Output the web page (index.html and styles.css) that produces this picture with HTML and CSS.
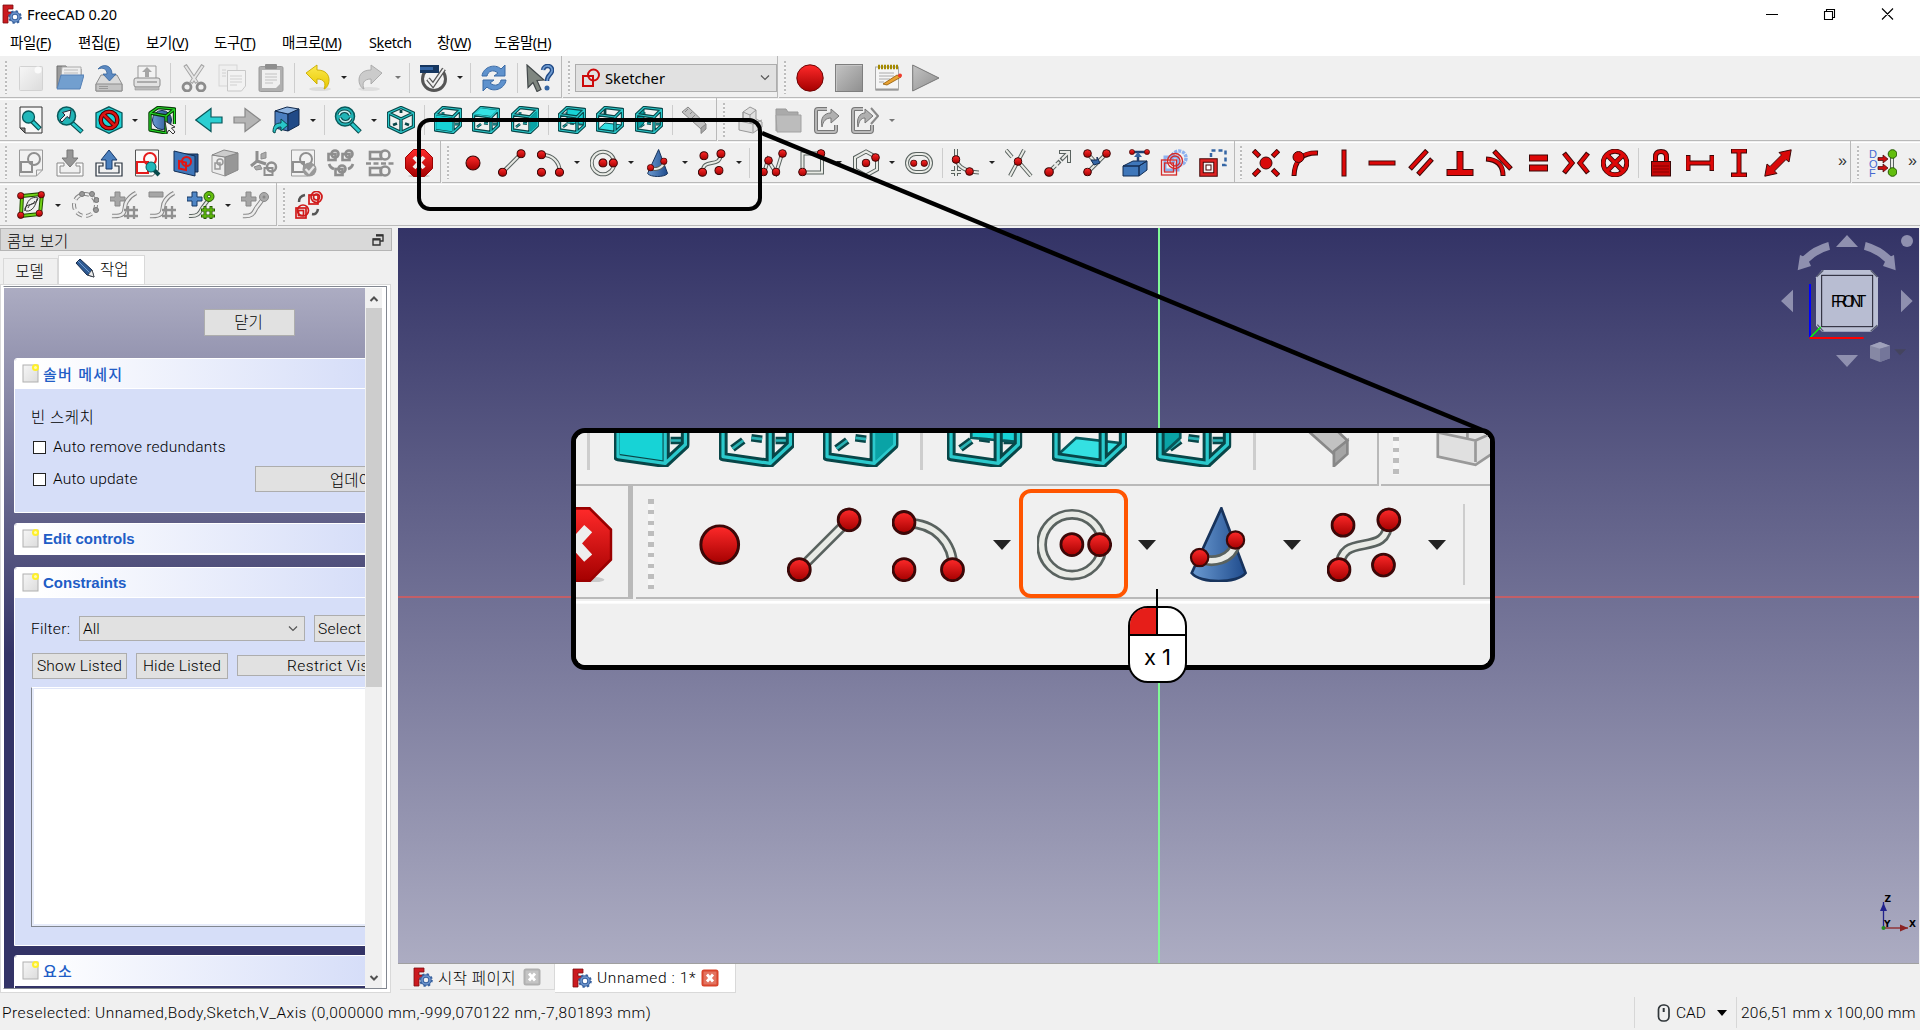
FILE: index.html
```html
<!DOCTYPE html>
<html lang="ko">
<head>
<meta charset="utf-8">
<title>FreeCAD 0.20</title>
<link rel="stylesheet" href="styles.css">
</head>
<body>
<svg class="defs" aria-hidden="true">
  <defs>
    <linearGradient id="red" x1="0" y1="0" x2="0" y2="1"><stop offset="0" stop-color="#ff2a2a"/><stop offset="1" stop-color="#a40000"/></linearGradient>
    <linearGradient id="blue" x1="0" y1="0" x2="1" y2="0"><stop offset="0" stop-color="#6b9bd2"/><stop offset="1" stop-color="#1f4b8c"/></linearGradient>
    <linearGradient id="grey" x1="0" y1="0" x2="1" y2="1"><stop offset="0" stop-color="#c4c4c4"/><stop offset="1" stop-color="#8f8f8f"/></linearGradient>
    <linearGradient id="paper" x1="0" y1="0" x2="1" y2="1"><stop offset="0" stop-color="#f6f6f6"/><stop offset="1" stop-color="#dcdcdc"/></linearGradient>
    <linearGradient id="yellow" x1="0" y1="0" x2="0" y2="1"><stop offset="0" stop-color="#fce94f"/><stop offset="1" stop-color="#e8c800"/></linearGradient>
  </defs>
  <!-- application -->
  <symbol id="app" viewBox="0 0 20 20"><path d="M1 1h10v4H6v3h4v4H6v7H1z" fill="#cb1a1f" stroke="#7c0c10" stroke-width=".8"/><circle cx="13" cy="13" r="4" fill="none" stroke="#37619e" stroke-width="3.4"/><circle cx="13" cy="13" r="5.8" fill="none" stroke="#37619e" stroke-width="2" stroke-dasharray="2.3 2.25"/><circle cx="13" cy="13" r="4" fill="none" stroke="#6d94cc" stroke-width="1.6"/></symbol>
  <symbol id="note" viewBox="0 0 18 20"><rect x="1" y="2" width="15" height="17" fill="url(#paper)" stroke="#b0b0b0"/><circle cx="13.5" cy="4.5" r="3.5" fill="#fff02a"/><circle cx="13.5" cy="4.5" r="1.5" fill="#fffbb0"/></symbol>
  <symbol id="closeTab" viewBox="0 0 18 18"><rect x=".5" y=".5" width="17" height="17" rx="2.5" fill="currentColor"/><rect x="2.5" y="2.5" width="13" height="13" fill="#fff" opacity=".25"/><path d="M6 5.500l6 7M12 5.500l-6 7" stroke="#fff" stroke-width="2.8"/></symbol>
  <!-- file -->
  <symbol id="new" viewBox="0 0 28 28"><rect x="2.5" y="2.5" width="23" height="24" rx="1" fill="url(#paper)" stroke="#d2d2d2"/><circle cx="21" cy="6" r="3.5" fill="#fafafa"/></symbol>
  <symbol id="open" viewBox="0 0 28 28"><path d="M1 24V2h9l2 3h13v6" fill="#9b9b9b" stroke="#6f6f6f"/><path d="M6 3h19v9H5z" fill="#eee" stroke="#aaa"/><path d="M8 6h14M8 9h14" stroke="#bbb"/><path d="M5 11h23l-4 14H1z" fill="#729fcf" stroke="#5580b6"/></symbol>
  <symbol id="save" viewBox="0 0 28 28"><path d="M6 11h16l5 9v7H1v-7z" fill="#dadada" stroke="#8d8d8d"/><path d="M1 20h26v7H1z" fill="#c4c4c4" stroke="#8d8d8d"/><path d="M4 22.500h9M4 24.500h9" stroke="#999"/><path d="M3 5C8-1 17 1 17 10h4l-6.500 7L8 10h4C12 5 8 3 3 5z" fill="#5c8ac2" stroke="#34639c" stroke-width=".8"/></symbol>
  <symbol id="print" viewBox="0 0 28 28"><path d="M5 16V2h18v14" fill="#f2f2f2" stroke="#999"/><path d="M14 3l5 5h-3v5h-4V8H9z" fill="#a5a5a5"/><rect x="1" y="14" width="26" height="9" rx="2" fill="#e2e2e2" stroke="#8b8b8b"/><path d="M4 18h20" stroke="#777"/><path d="M2 23h24v3H2z" fill="#bbb" stroke="#999" stroke-width=".6"/></symbol>
  <symbol id="cut" viewBox="0 0 28 28"><path d="M5 1l12 18M23 1L11 19" stroke="#a5a5a5" stroke-width="4"/><path d="M5.500 2l11 16M22.500 2l-11 16" stroke="#e6e6e6" stroke-width="2"/><circle cx="7" cy="23" r="4" fill="none" stroke="#8c8c8c" stroke-width="2.8"/><circle cx="21" cy="23" r="4" fill="none" stroke="#8c8c8c" stroke-width="2.8"/></symbol>
  <symbol id="copy" viewBox="0 0 28 28"><rect x="1" y="1" width="18" height="21" fill="#efefef" stroke="#d5d5d5"/><path d="M9.500 6.500h18V22l-4 5h-14z" fill="#f2f2f2" stroke="#c8c8c8"/><path d="M12 12h12M12 15h12M12 18h12M12 21h7M4 6h4M4 9h4M4 12h4" stroke="#d0d0d0"/></symbol>
  <symbol id="paste" viewBox="0 0 28 28"><rect x="2" y="2.5" width="24" height="25" rx="1.5" fill="#b0b0b0" stroke="#9a9a9a"/><path d="M5 6h18v14l-4 4H5z" fill="#f0f0f0"/><rect x="8" y="0" width="12" height="5" rx="1" fill="#8e8e8e"/><path d="M8 10h12M8 13h12M8 16h12M8 19h8" stroke="#c2c2c2"/></symbol>
  <symbol id="undo" viewBox="0 0 28 28"><ellipse cx="16" cy="25" rx="11" ry="2" fill="#dcdcdc"/><path d="M2 9l11-8v5c9 0 12 5 12 10 0 4-2 8-5 9 2-5 1-10-7-10v5z" fill="url(#yellow)" stroke="#c9ab00" stroke-width=".9"/></symbol>
  <symbol id="redo" viewBox="0 0 28 28"><ellipse cx="12" cy="25" rx="11" ry="2" fill="#dedede"/><path d="M25 9L14 1v5C5 6 2 11 2 16c0 4 2 8 5 9-2-5-1-10 7-10v5z" fill="#cbcbcb" stroke="#a7a7a7" stroke-width=".9"/></symbol>
  <symbol id="check" viewBox="0 0 28 28"><circle cx="15" cy="15" r="11.5" fill="#f2f2f2" stroke="#555" stroke-width="3"/><path d="M1 1h19v8H1z" fill="#16365f"/><path d="M1 3h13v3H1z" fill="#3465a4"/><path d="M20 1l5 4-5 4z" fill="#eee"/><path d="M9 15l5 6L25 5" fill="none" stroke="#555" stroke-width="4.5"/><path d="M9 15l5 6L25 5" fill="none" stroke="#f0f0f0" stroke-width="2"/></symbol>
  <symbol id="refresh" viewBox="0 0 28 28"><path d="M2 12C3 3 15-1 21 5l4-4v11H14l4-3C13 5 8 7 7 12z" fill="#5f92cd" stroke="#3a6aa5"/><path d="M26 16c-1 9-13 13-19 7l-4 4V16h11l-4 3c5 4 10 2 11-3z" fill="#5f92cd" stroke="#3a6aa5"/></symbol>
  <symbol id="help" viewBox="0 0 28 28"><path d="M1 1l17 15-7 .5 4 9-4 2-4-9-5 5z" fill="#7f8680" stroke="#42484a" stroke-width="1.2"/><path d="M17 6c1-6 10-5 9 1-1 4-5 4-5 10" fill="none" stroke="#204a87" stroke-width="4.5"/><path d="M17 6c1-6 10-5 9 1-1 4-5 4-5 10" fill="none" stroke="#6d9ad0" stroke-width="1.8"/><circle cx="21" cy="24" r="2.5" fill="#3465a4"/></symbol>
  <symbol id="sketcher" viewBox="0 0 20 20"><rect x="2" y="8" width="10" height="10" fill="none" stroke="#cc0a0a" stroke-width="2"/><circle cx="12.5" cy="7" r="5.5" fill="none" stroke="#cc0a0a" stroke-width="2"/></symbol>
  <symbol id="record" viewBox="0 0 28 28"><circle cx="14" cy="14" r="13.2" fill="url(#red)" stroke="#6e0505" stroke-width="1"/></symbol>
  <symbol id="stop" viewBox="0 0 28 28"><rect x=".5" y=".5" width="27" height="27" fill="url(#grey)" stroke="#7e7e7e"/><path d="M1.500 27V1.500H27" fill="none" stroke="#c5c5c5"/></symbol>
  <symbol id="macro" viewBox="0 0 28 28"><rect x="1.5" y="3" width="23" height="23" fill="#f5f5f5" stroke="#aaa"/><path d="M2 25.500h22" stroke="#999" stroke-width="2"/><path d="M4 3h20" stroke="#a48a00" stroke-width="4.5" stroke-dasharray="2 1"/><path d="M5 9h15M5 12h15M5 15h11M5 18h5" stroke="#aaa"/><path d="M9 20l14-9 4 2-14 8z" fill="#e9a233" stroke="#8f5902" stroke-width=".8"/><circle cx="26" cy="11.5" r="2" fill="#ef3b2d"/></symbol>
  <symbol id="play" viewBox="0 0 28 28"><path d="M.7 1v26L27 14z" fill="url(#grey)" stroke="#777"/></symbol>
  <!-- view -->
  <symbol id="fitall" viewBox="0 0 28 28"><path d="M3 1h22v26H8l-5-5z" fill="#f7f7f7" stroke="#333"/><path d="M3 22h5v5z" fill="#888" stroke="#333"/><path d="M15 15l8 8" stroke="#07484a" stroke-width="5"/><path d="M15 15l7.500 7.500" stroke="#29c9cc" stroke-width="2.5"/><circle cx="11.500" cy="11" r="6" fill="#22b8ba" stroke="#07595b" stroke-width="1.3"/></symbol>
  <symbol id="fitsel" viewBox="0 0 28 28"><path d="M16 17l10 9" stroke="#07484a" stroke-width="5"/><path d="M16 17l9.500 8.500" stroke="#29c9cc" stroke-width="2.8"/><circle cx="10.500" cy="10" r="9" fill="#21b4b6" stroke="#07595b" stroke-width="1.5"/><path d="M4 14l5-5-2.500-2.500L15 4l-1.500 8.500L11 10.500 6 16z" fill="#f5f5f5" stroke="#223" stroke-width="1"/></symbol>
  <symbol id="drawstyle" viewBox="0 0 28 28"><path d="M14 .8L27 7v14l-13 6.300L1 21V7z" fill="#1fd2d5" stroke="#08575a" stroke-width="1.3"/><circle cx="14" cy="14" r="8.3" fill="none" stroke="#470000" stroke-width="4.5"/><path d="M8 8l12 12" stroke="#470000" stroke-width="4.5"/><circle cx="14" cy="14" r="8.3" fill="none" stroke="#dc1414" stroke-width="2.5"/><path d="M8 8l12 12" stroke="#dc1414" stroke-width="2.5"/></symbol>
  <symbol id="bbox" viewBox="0 0 28 28"><circle cx="14" cy="14" r="9.5" fill="url(#blue)" stroke="#10294d"/><g class="green"><path d="M2 7l16 3v17L2 24zM2 7l8-5.500L26.500 3 18 10M26.500 3v15" class="ko"/><path d="M2 7l16 3v17L2 24zM2 7l8-5.500L26.500 3 18 10M26.500 3v15" class="ki"/></g><path d="M17 15l10 6-3.500 1 3.500 4-2 2-4-4-2 3z" fill="#f3f3f3" stroke="#333"/></symbol>
  <symbol id="back" viewBox="0 0 28 28"><path d="M.7 14L16 2.500V11h11v6H16v8.500z" fill="#2bcfd2" stroke="#08575a" stroke-width="1.2"/></symbol>
  <symbol id="fwd" viewBox="0 0 28 28"><path d="M27.300 14L12 2.500V11H1v6h11v8.500z" fill="#b4b4b4" stroke="#888" stroke-width="1.2"/></symbol>
  <symbol id="linknav" viewBox="0 0 28 28"><path d="M3 5l13 3v17L3 22z" fill="#4a7fc0" stroke="#10294d"/><path d="M16 8l11-5v16l-11 6z" fill="#204a87" stroke="#10294d"/><path d="M3 5l12-4 12 2-11 5z" fill="#8fb4e0" stroke="#10294d"/><path d="M1 26c0-7 3-9 8-9v-4l7 6-7 6v-4c-3 0-5 1-6 6z" fill="#28c6c9" stroke="#07484a"/></symbol>
  <symbol id="sync" viewBox="0 0 28 28"><path d="M17 17l9 9" stroke="#07484a" stroke-width="5"/><path d="M17 17l8.500 8.500" stroke="#29c9cc" stroke-width="2.8"/><circle cx="11" cy="10.5" r="9.5" fill="#21b4b6" stroke="#07595b" stroke-width="1.5"/><path d="M5 9c2-5 9-5 11 0M17 12c-2 5-9 5-11 0" fill="none" stroke="#0c4749" stroke-width="3.5"/><path d="M5 9c2-5 9-5 11 0M17 12c-2 5-9 5-11 0" fill="none" stroke="#c7f1f2" stroke-width="1.5"/></symbol>
  <symbol id="iso" viewBox="0 0 28 28"><path d="M14 1.500L26.500 7v13.500L14 26.500 1.500 20.500V7zM1.500 7L14 13l12.500-6M14 13v13" class="ko"/><path d="M14 1.500L26.500 7v13.500L14 26.500 1.500 20.500V7zM1.500 7L14 13l12.500-6M14 13v13" class="ki"/><path d="M14 4v3M6 19l4-1.500M22 19l-4-1.500" class="stub-o"/></symbol>
  <symbol id="cube" viewBox="0 0 28 28"><path d="M1.500 8.500L19 11v15.500L1.500 24zM1.500 8.500L9 1.500l17.500 2L19 11M26.500 3.500v16l-7.500 7" class="ko"/><path d="M1.500 8.500L19 11v15.500L1.500 24zM1.500 8.500L9 1.500l17.500 2L19 11M26.500 3.500v16l-7.500 7" class="ki"/></symbol>
  <symbol id="stubs" viewBox="0 0 28 28"><path d="M5 21l4-3M9 6v3M12 17l4 .500M21 18h4" class="stub-o"/><path d="M5 21l4-3M9 6v3M12 17l4 .500M21 18h4" class="stub-i"/></symbol>
  <symbol id="front" viewBox="0 0 28 28"><use href="#stubs"/><use href="#cube"/><path d="M2.200 9.500L18 11.800v13.500L2.200 23z" fill="#17d3d6"/></symbol>
  <symbol id="top" viewBox="0 0 28 28"><use href="#stubs"/><use href="#cube"/><path d="M2.500 8L9 2.200l16 2L19 10z" fill="#34e0e2"/></symbol>
  <symbol id="right" viewBox="0 0 28 28"><use href="#stubs"/><use href="#cube"/><path d="M19.500 11.500L26 5v14.500l-6.500 6z" fill="#0aa3a6"/></symbol>
  <symbol id="rear" viewBox="0 0 28 28"><use href="#stubs"/><path d="M9 2l17 2v14L9 16.500z" fill="#17d3d6"/><path d="M9 2v15l17 1.500" fill="none" stroke="#08575a"/><use href="#cube"/></symbol>
  <symbol id="bottom" viewBox="0 0 28 28"><path d="M2 23.500L9 17l17 2-7 7z" fill="#34e0e2" stroke="#08575a"/><path d="M9 3v5" class="stub-o"/><use href="#cube"/></symbol>
  <symbol id="left" viewBox="0 0 28 28"><use href="#stubs"/><path d="M2 9l7-7v15l-7 6.500z" fill="#0aa3a6" stroke="#08575a"/><use href="#cube"/></symbol>
  <symbol id="ruler" viewBox="0 0 28 28"><path d="M1 6l6-5 18 17-5 5z" fill="#c2c2c2" stroke="#888"/><path d="M20 22l5-4v5l-5 4.500z" fill="#a5a5a5" stroke="#888"/><path d="M7 3l-3 3M11 6l-2 2M14 9l-3 3M18 12l-2 2" stroke="#888"/></symbol>
  <symbol id="part" viewBox="0 0 28 28"><path d="M8 6l7-5 6 3v9l6 3v5l-9 6-14-3v-9l4-2z" fill="#e0e0e0" stroke="#999"/><path d="M4 15l14 3v8M18 18l9-4M8 12V6l7 3 6-5M15 9v8" fill="none" stroke="#999"/></symbol>
  <symbol id="folder" viewBox="0 0 28 28"><path d="M2 25V3h10l2 3h10v5" fill="#aaa" stroke="#999"/><path d="M2 9h25v17H3z" fill="#bcbcbc" stroke="#a2a2a2"/></symbol>
  <symbol id="link" viewBox="0 0 28 28"><path d="M14 3H5q-2 0-2 2v19q0 2 2 2h16q2 0 2-2v-5" fill="none" stroke="#777" stroke-width="4"/><path d="M14 3H5q-2 0-2 2v19q0 2 2 2h16q2 0 2-2v-5" fill="none" stroke="#bbb" stroke-width="1.8"/><path d="M9 21c-2-9 2-14 9-14V3l8 7-8 7v-5c-5 0-8 3-9 9z" fill="#b0b0b0" stroke="#777"/></symbol>
  <symbol id="links" viewBox="0 0 28 28"><path d="M12 3H4q-2 0-2 2v19q0 2 2 2h15q2 0 2-2v-5" fill="none" stroke="#777" stroke-width="4"/><path d="M12 3H4q-2 0-2 2v19q0 2 2 2h15q2 0 2-2v-5" fill="none" stroke="#bbb" stroke-width="1.8"/><path d="M7 21C5 12 9 7 14 7V3l8 7-8 7v-5c-4 0-6 3-7 9z" fill="#b0b0b0" stroke="#777"/><path d="M20 2l7 8-7 8" fill="none" stroke="#888" stroke-width="2"/></symbol>
  <!-- sketch -->
  <symbol id="sketch" viewBox="0 0 28 28"><path d="M2.500 1h23v20l-6 6h-17z" fill="#f2f2f2" stroke="#9a9a9a"/><path d="M19.500 27v-6h6" fill="none" stroke="#9a9a9a"/><rect x="4" y="13" width="11" height="10" fill="none" stroke="#8f8f8f" stroke-width="2"/><circle cx="17" cy="10" r="6" fill="none" stroke="#8f8f8f" stroke-width="2"/></symbol>
  <symbol id="import" viewBox="0 0 28 28"><path d="M8 14H1v13h26V14h-7v3h4v7H4v-7h4z" fill="#fafafa" stroke="#888"/><path d="M11 1h6v8h5l-8 9-8-9h5z" fill="#969696" stroke="#777"/></symbol>
  <symbol id="export" viewBox="0 0 28 28"><path d="M8 14H1v13h26V14h-7v3h4v7H4v-7h4z" fill="#fafafa" stroke="#27313d" stroke-width="1.2"/><path d="M11 20h6v-9h5l-8-10-8 10h5z" fill="#4b80be" stroke="#17396b"/></symbol>
  <symbol id="viewsk" viewBox="0 0 28 28"><path d="M2.500 1h23v20l-6 6h-17z" fill="#fafafa" stroke="#555"/><rect x="4" y="13" width="11" height="11" fill="none" stroke="#e51b1b" stroke-width="2"/><circle cx="17" cy="10" r="6" fill="none" stroke="#e51b1b" stroke-width="2"/><path d="M20 20l6 6" stroke="#07484a" stroke-width="4"/><circle cx="18" cy="18" r="5" fill="#22b8ba" stroke="#07595b"/></symbol>
  <symbol id="section" viewBox="0 0 28 28"><path d="M9 5h17v18H9z" fill="#27548f" stroke="#122c52"/><path d="M2 2l21 5v20L2 22z" fill="#3f77ba" stroke="#122c52"/><path d="M7 12l7 1.500V21l-7-1.500z" fill="none" stroke="#e01515" stroke-width="2"/><circle cx="14.5" cy="12.5" r="4.5" fill="none" stroke="#e01515" stroke-width="2"/></symbol>
  <symbol id="mapsk" viewBox="0 0 28 28"><path d="M1 6l13 2v19L1 23z" fill="#ececec" stroke="#999"/><path d="M14 8l13-4v17l-13 6z" fill="#979797" stroke="#888"/><path d="M1 6l12-5 14 3-13 4z" fill="#ccc" stroke="#888"/><rect x="4" y="14" width="5" height="6" fill="none" stroke="#999" stroke-width="1.5"/><circle cx="9" cy="13" r="3" fill="none" stroke="#999" stroke-width="1.5"/></symbol>
  <symbol id="reorient" viewBox="0 0 28 28"><path d="M7 2v10l-6 5M7 12l9 3" fill="none" stroke="#8e8e8e" stroke-width="3"/><path d="M11 5l5-2v6l-5 1zM4 18l6-2 2 4-6 1z" fill="#aaa" stroke="#8e8e8e"/><rect x="14.500" y="19" width="8" height="7" fill="none" stroke="#8f8f8f" stroke-width="2"/><circle cx="21.500" cy="18" r="4.5" fill="none" stroke="#8f8f8f" stroke-width="2.5"/></symbol>
  <symbol id="validate" viewBox="0 0 28 28"><use href="#sketch"/><circle cx="20.5" cy="20.5" r="7" fill="#999"/><path d="M16.500 20l3.500 3.500 5-6" fill="none" stroke="#e8e8e8" stroke-width="2.2"/></symbol>
  <symbol id="mergesk" viewBox="0 0 28 28"><g fill="none" stroke="#8e8e8e" stroke-width="2.6"><rect x="1.5" y="5" width="7" height="6"/><circle cx="8" cy="5" r="3.5"/><rect x="15.500" y="5" width="7" height="6"/><circle cx="22" cy="5" r="3.5"/><rect x="8.500" y="20" width="7" height="6"/><circle cx="15" cy="20" r="3.5"/><path d="M2 15c1 3 2 4 5 5M26 15c-1 3-2 4-5 5"/></g></symbol>
  <symbol id="mirrorsk" viewBox="0 0 28 28"><g fill="none" stroke="#8e8e8e" stroke-width="2.6"><rect x="4" y="3" width="11" height="7"/><circle cx="19" cy="6" r="4.5"/><rect x="4" y="19" width="11" height="7"/><circle cx="19" cy="22" r="4.5"/><path d="M0 14.500h28" stroke-dasharray="5 2.5"/></g></symbol>
  <symbol id="leave" viewBox="0 0 28 28"><ellipse cx="14" cy="27" rx="11" ry="1.5" fill="#c9c9c9"/><path d="M8.500.5h11l8 8v11l-8 8h-11l-8-8v-11z" fill="url(#red)" stroke="#9a0000"/><path d="M9 8l10 11M19 8L9 19" stroke="#eee" stroke-width="4"/></symbol>
  <!-- geometry -->
  <symbol id="dot" viewBox="0 0 10 10"><circle cx="5" cy="5" r="4.3" fill="url(#red)" stroke="#3c0808" stroke-width="1.1"/></symbol>
  <symbol id="point" viewBox="0 0 28 28"><circle cx="14" cy="14" r="7" fill="url(#red)" stroke="#3c0808" stroke-width="1.1"/></symbol>
  <symbol id="line" viewBox=".2 0 28 28"><path d="M5 23L23 5" class="ro"/><path d="M5 23L23 5" class="ri"/><use href="#dot" x="0" y="18.5" width="9.5" height="9.5"/><use href="#dot" x="18.5" y="0" width="9.5" height="9.5"/></symbol>
  <symbol id="arc" viewBox=".3 0 28 28"><path d="M6 6c10 0 17 7 17 17" class="ro"/><path d="M6 6c10 0 17 7 17 17" class="ri"/><use href="#dot" x="0" y="1" width="9.5" height="9.5"/><use href="#dot" x="0" y="18.5" width="9.5" height="9.5"/><use href="#dot" x="18" y="18.5" width="9.5" height="9.5"/></symbol>
  <symbol id="circle" viewBox="0 0 28 28"><circle cx="13" cy="14" r="11.3" class="ro"/><circle cx="13" cy="14" r="11.3" class="ri"/><use href="#dot" x="8.2" y="9.2" width="9.5" height="9.5"/><use href="#dot" x="18.5" y="9.2" width="9.5" height="9.5"/></symbol>
  <symbol id="cone" viewBox="-.3 0 28 28"><path d="M14.300 .5l9 24c-3 4-17 4-20 0z" fill="url(#blue)" stroke="#17335c"/><path d="M6 19c5 2 12 1 14-6" class="ro"/><path d="M6 19c5 2 12 1 14-6" class="ri"/><use href="#dot" x="2.5" y="15" width="7.5" height="7.5"/><use href="#dot" x="15.8" y="8.5" width="7.5" height="7.5"/></symbol>
  <symbol id="spline" viewBox=".3 0 28 28"><path d="M5 23C5 8 23 20 23 5" class="ro"/><path d="M5 23C5 8 23 20 23 5" class="ri"/><use href="#dot" x="0" y="18.5" width="9.5" height="9.5"/><use href="#dot" x="18.5" y="0" width="9.5" height="9.5"/><use href="#dot" x="1.5" y="2" width="9.5" height="9.5"/><use href="#dot" x="16.5" y="16.8" width="9.5" height="9.5"/></symbol>
  <symbol id="polyline" viewBox="0 0 28 28"><path d="M5 24L9 11l8 13 6-19" class="ro"/><path d="M5 24L9 11l8 13 6-19" class="ri"/><use href="#dot" x="0" y="18.5" width="9" height="9"/><use href="#dot" x="5" y="7" width="9" height="9"/><use href="#dot" x="12.5" y="18.5" width="9" height="9"/><use href="#dot" x="19" y="0" width="9" height="9"/></symbol>
  <symbol id="rect" viewBox="0 0 28 28"><path d="M4.500 4.500H24v19H4.500z" class="ro"/><path d="M4.500 4.500H24v19H4.500z" class="ri"/><use href="#dot" x="0" y="18.5" width="9" height="9"/><use href="#dot" x="18.5" y="0" width="9" height="9"/></symbol>
  <symbol id="hex" viewBox="0 0 28 28"><path d="M14 2.500l11 6v12l-11 6-11-6v-12z" class="ro"/><path d="M14 2.500l11 6v12l-11 6-11-6v-12z" class="ri"/><use href="#dot" x="9.5" y="9.5" width="9" height="9"/><use href="#dot" x="19" y="4" width="9" height="9"/></symbol>
  <symbol id="slot" viewBox="0 0 28 28"><rect x="2" y="5" width="24" height="18" rx="9" class="ro"/><rect x="2" y="5" width="24" height="18" rx="9" class="ri"/><use href="#dot" x="5" y="10.5" width="7.5" height="7.5"/><use href="#dot" x="15.5" y="10.5" width="7.5" height="7.5"/></symbol>
  <symbol id="fillet" viewBox="0 0 28 28"><path d="M5 0v10q3 12 23 13.500M5 17v10M0 23h10" class="ro"/><path d="M5 0v10q3 12 23 13.500M5 17v10M0 23h10" class="ri"/><use href="#dot" x=".5" y="6" width="9" height="9"/><use href="#dot" x="14" y="18" width="9" height="9"/></symbol>
  <symbol id="trim" viewBox="0 0 28 28"><path d="M19 1L5 27M13 12l13 15M1 1l6 7" class="ro"/><path d="M19 1L5 27M13 12l13 15M1 1l6 7" class="ri"/><use href="#dot" x="8.5" y="8" width="9" height="9"/></symbol>
  <symbol id="extend" viewBox="0 0 28 28"><path d="M5 23l11-11" class="ro" stroke-dasharray="9 2"/><path d="M17 11l8-8M15 3h10v11" class="ro"/><path d="M5 23l10-10M18 10l6-6M16 3h9v10" class="ri"/><use href="#dot" x="0" y="18" width="10" height="10"/></symbol>
  <symbol id="split" viewBox="0 0 28 28"><path d="M5 5l7 8M5 23L24 4" class="ro"/><path d="M5 5l7 8M5 23L24 4" class="ri"/><path d="M8 11h6v-3l3 6-6 2z" fill="#3465a4" stroke="#122c52"/><use href="#dot" x="0" y="0" width="9" height="9"/><use href="#dot" x="0" y="18.5" width="9" height="9"/><use href="#dot" x="19" y="0" width="9" height="9"/></symbol>
  <symbol id="external" viewBox="0 0 28 28"><path d="M1 17l10-5h14l-8 5zM1 17h16v10H1zM17 17l8-5v9l-8 6z" fill="#3f77ba" stroke="#122c52"/><path d="M9 3h16M16 12V6" stroke="#1f3f70" stroke-width="2.5"/><path d="M12 8l4-5 4 5z" fill="#3465a4"/><use href="#dot" x="7" y="0" width="6" height="6"/><use href="#dot" x="22" y="0" width="6" height="6"/></symbol>
  <symbol id="carbon" viewBox="0 0 28 28"><rect x="5" y="8" width="13" height="13" fill="none" stroke="#8db0ee" stroke-width="3"/><circle cx="19" cy="9" r="7" fill="none" stroke="#8db0ee" stroke-width="3.5" stroke-dasharray="3 1"/><rect x="1.5" y="11" width="15" height="15" fill="none" stroke="#d42a2a" stroke-width="1.3"/><rect x="4.5" y="14" width="9" height="9" fill="none" stroke="#d42a2a" stroke-width="1.3"/><circle cx="15" cy="12" r="7.5" fill="none" stroke="#d42a2a" stroke-width="1.3"/><circle cx="15" cy="12" r="5" fill="none" stroke="#d42a2a" stroke-width="1.3"/></symbol>
  <symbol id="construct" viewBox="0 0 28 28"><path d="M12 8V1.500h14.500V16H20" fill="none" stroke="#3465a4" stroke-width="2.5" stroke-dasharray="4 3"/><rect x="2.5" y="11.5" width="14" height="14" fill="none" stroke="#470000" stroke-width="4.5"/><rect x="2.5" y="11.5" width="14" height="14" fill="none" stroke="#e02323" stroke-width="2.5"/><rect x="7" y="16" width="5" height="5" fill="#fff" stroke="#470000"/></symbol>
  <!-- constraints -->
  <symbol id="coincident" viewBox="0 0 28 28"><path d="M1.500 1.500l6 6M26.500 1.500l-6 6M1.500 26.500l6-6M26.500 26.500l-6-6" class="co"/><path d="M2.200 2.200l4.600 4.600M25.800 2.200l-4.600 4.600M2.200 25.800l4.600-4.600M25.800 25.800l-4.600-4.600" class="ci"/><circle cx="14" cy="14" r="6" fill="#d90909" stroke="#3c0808"/></symbol>
  <symbol id="onobject" viewBox="0 0 28 28"><path d="M27 4Q4 3 3 27" class="co"/><path d="M26 4Q4 3 3 26" class="ci"/><circle cx="7.5" cy="8" r="5.5" fill="#d90909" stroke="#3c0808"/></symbol>
  <symbol id="vertical" viewBox="0 0 28 28"><path d="M14 .5v27" class="co"/><path d="M14 1.500v25" class="ci"/></symbol>
  <symbol id="horizontal" viewBox="0 0 28 28"><path d="M.5 14h27" class="co"/><path d="M1.500 14h25" class="ci"/></symbol>
  <symbol id="parallel" viewBox="0 0 28 28"><path d="M3 20L20 1.500M11 25.500L25 10" class="co"/><path d="M3.700 19.200L19.300 2.300M11.700 24.700L24.300 10.800" class="ci"/></symbol>
  <symbol id="perp" viewBox="0 0 28 28"><path d="M14 2v22M.5 23.500h27" class="co wide"/><path d="M14 3v22M1.500 23.500h25" class="ci wide"/></symbol>
  <symbol id="tangent" viewBox="0 0 28 28"><path d="M9 2l17 18M1 10q17 1 17 17" class="co"/><path d="M9.700 2.800L25.300 19.200M2 10q16 1 16 16" class="ci"/></symbol>
  <symbol id="equal" viewBox="0 0 28 28"><path d="M5 9h19M5 19h19" class="co wide"/><path d="M6 9h17M6 19h17" class="ci wide"/></symbol>
  <symbol id="symmetric" viewBox="0 0 28 28"><path d="M2 4l8 10-8 10M26 4l-8 10 8 10" class="co"/><path d="M2.500 5L10 14l-7.500 9M25.500 5L18 14l7.500 9" class="ci"/></symbol>
  <symbol id="block" viewBox="0 0 28 28"><circle cx="14" cy="14" r="11.8" class="co"/><path d="M6 6l16 16M22 6L6 22" class="co"/><circle cx="14" cy="14" r="11.8" class="ci"/><path d="M6 6l16 16M22 6L6 22" class="ci"/></symbol>
  <symbol id="lock" viewBox="0 0 28 28"><path d="M8.500 14V8q0-5.500 5.500-5.500T19.500 8v6" class="co"/><path d="M8.500 14V8q0-5.500 5.500-5.500T19.500 8v6" class="ci"/><rect x="4.5" y="12.5" width="19" height="14.5" fill="#c60606" stroke="#3c0808"/><path d="M6 17h16M6 20h16M6 23h16" stroke="#8a0000"/></symbol>
  <symbol id="hdist" viewBox="0 0 28 28"><path d="M2 6v16M26 6v16M2 14h24" class="co"/><path d="M2 7v14M26 7v14M2 14h24" class="ci"/></symbol>
  <symbol id="vdist" viewBox="0 0 28 28"><path d="M6 2h16M6 26h16M14 2v24" class="co"/><path d="M7 2h14M7 26h14M14 2v24" class="ci"/></symbol>
  <symbol id="dist" viewBox="0 0 28 28"><path d="M.8 27.200L3 15l3 2.500L17.500 6 15 3.500 27.200.8 25 13l-3-2.500L10.500 22l2.500 2.500z" fill="#d90909" stroke="#3c0808"/></symbol>
  <!-- B-spline tools -->
  <symbol id="bdegree" viewBox="0 0 28 28"><path d="M5 5l20-2-2 20-19 2z" fill="none" stroke="#1d4a00" stroke-width="4"/><path d="M5 5l20-2-2 20-19 2z" fill="none" stroke="#73d216" stroke-width="2"/><path d="M8 20C6 11 20 16 21 7 14 5 10 9 8 20z" fill="#eee" stroke="#333"/><path d="M9 20C16 21 19 13 20 8M11 17c2-5 5-3 7-7" fill="none" stroke="#333"/><use href="#dot" x="0" y="1" width="7.5" height="7.5"/><use href="#dot" x="20.5" y="0" width="7.5" height="7.5"/><use href="#dot" x="0" y="20.5" width="7.5" height="7.5"/><use href="#dot" x="18.5" y="18.5" width="7.5" height="7.5"/></symbol>
  <symbol id="bpoly" viewBox="0 0 28 28"><circle cx="14" cy="14" r="11" fill="none" stroke="#888" stroke-width="4" stroke-dasharray="6 4"/><circle cx="14" cy="14" r="11" fill="none" stroke="#eee" stroke-width="2" stroke-dasharray="6 4"/><g fill="#999" stroke="#777"><circle cx="11" cy="3" r="2.5"/><circle cx="21" cy="3" r="2.5"/><circle cx="25.5" cy="9" r="2.5"/><circle cx="25" cy="19" r="2.5"/></g></symbol>
  <symbol id="bcurve" viewBox="0 0 28 28"><path d="M2 25c18 1 10-9 15-15q3-5 9-8" fill="none" stroke="#888" stroke-width="4.5"/><path d="M2 25c18 1 10-9 15-15q3-5 9-8" fill="none" stroke="#ececec" stroke-width="2.5"/></symbol>
  <symbol id="binc" viewBox="0 0 28 28"><use href="#bcurve"/><path d="M5 1h5v5h5v4h-5v5H5v-5H0V6h5z" fill="#a6a6a6" stroke="#888"/><path d="M18 15v13M24 15v13M14 19h14M14 25h14" stroke="#909090" stroke-width="2.3"/></symbol>
  <symbol id="bdec" viewBox="0 0 28 28"><use href="#bcurve"/><path d="M1 1h14v5H1z" fill="#a6a6a6" stroke="#888"/><path d="M18 15v13M24 15v13M14 19h14M14 25h14" stroke="#909090" stroke-width="2.3"/></symbol>
  <symbol id="bmult" viewBox="0 0 28 28"><path d="M2 25c12 1 11-6 14-9q3-4 6-8" class="ro"/><path d="M2 25c12 1 11-6 14-9q3-4 6-8" class="ri"/><path d="M5 1h5v5h5v4h-5v5H5v-5H0V6h5z" fill="#4f86c6" stroke="#173865"/><circle cx="22" cy="5.5" r="5" fill="#62bd0d" stroke="#245b00"/><circle cx="22" cy="5.5" r="1.5" fill="#fff" stroke="#245b00"/><path d="M18 15v13M24 15v13M14 19h14M14 25h14" stroke="#245b00" stroke-width="3"/><path d="M18 16v11M24 16v11M15 19h12M15 25h12" stroke="#62bd0d" stroke-width="1.4"/></symbol>
  <symbol id="bknot" viewBox="0 0 28 28"><path d="M2 25c12 1 11-6 14-9q3-4 6-8" fill="none" stroke="#888" stroke-width="4.5"/><path d="M2 25c12 1 11-6 14-9q3-4 6-8" fill="none" stroke="#ececec" stroke-width="2.5"/><path d="M5 1h5v5h5v4h-5v5H5v-5H0V6h5z" fill="#a6a6a6" stroke="#888"/><circle cx="23" cy="6" r="4.5" fill="#aaa" stroke="#888"/><circle cx="23" cy="6" r="1.5" fill="#888"/></symbol>
  <symbol id="vspace" viewBox="0 0 28 28"><g fill="none" stroke="#d01a1a" stroke-width="1.7"><rect x="14" y="4" width="9" height="9"/><circle cx="21.5" cy="6" r="5.5"/><circle cx="21.5" cy="6" r="3"/><rect x="1" y="17" width="10" height="10"/><rect x="3.5" y="19.5" width="5" height="5"/><circle cx="8" cy="19.5" r="5.5"/></g><path d="M4 11q0-6 6-7M17 23q5 1 6-5" fill="none" stroke="#555" stroke-width="2.5"/></symbol>
</svg>

<div class="app">
  <header class="titlebar">
    <svg class="app-icon"><use href="#app"/></svg><span class="title">FreeCAD 0.20</span>
    <svg class="window-buttons" viewBox="0 0 140 20"><path d="M5 10.500h12M63.500 7.500h8v8h-8zM65.500 7.500v-2h8v8h-2M121 4.500l11 11M132 4.500l-11 11" fill="none" stroke="#000" stroke-width="1.1"/></svg>
  </header>
  <nav class="menu">
    <span>파일(<u>F</u>)</span><span>편집(<u>E</u>)</span><span>보기(<u>V</u>)</span><span>도구(<u>T</u>)</span><span class="wide">매크로(<u>M</u>)</span><span class="sketch-menu">S<u>k</u>etch</span><span class="window-menu">창(<u>W</u>)</span><span>도움말(<u>H</u>)</span>
  </nav>

  <div class="row first">
    <div class="toolbar file-bar">
      <i class="btn"><svg><use href="#new"/></svg></i><i class="btn"><svg><use href="#open"/></svg></i><i class="btn"><svg><use href="#save"/></svg></i><i class="btn"><svg><use href="#print"/></svg></i><i class="sep"></i>
      <i class="btn"><svg><use href="#cut"/></svg></i><i class="btn"><svg><use href="#copy"/></svg></i><i class="btn"><svg><use href="#paste"/></svg></i><i class="sep"></i>
      <i class="btn"><svg><use href="#undo"/></svg></i><i class="drop"></i><i class="btn"><svg><use href="#redo"/></svg></i><i class="drop off"></i><i class="sep"></i>
      <i class="btn"><svg><use href="#check"/></svg></i><i class="drop"></i><i class="sep"></i><i class="btn"><svg><use href="#refresh"/></svg></i><i class="sep"></i><i class="btn"><svg><use href="#help"/></svg></i>
    </div>
    <div class="toolbar workbench-bar">
      <div class="combo workbench"><svg class="wb-icon"><use href="#sketcher"/></svg><span>Sketcher</span><svg class="chevron" viewBox="0 0 10 6"><path d="M1 .5l4 4 4-4" fill="none" stroke="#555" stroke-width="1.2"/></svg></div>
    </div>
    <div class="toolbar rest">
      <i class="btn"><svg><use href="#record"/></svg></i><i class="btn"><svg><use href="#stop"/></svg></i><i class="btn"><svg><use href="#macro"/></svg></i><i class="btn"><svg><use href="#play"/></svg></i>
    </div>
  </div>

  <div class="row tall">
    <div class="toolbar view-bar">
      <i class="btn"><svg><use href="#fitall"/></svg></i><i class="btn"><svg><use href="#fitsel"/></svg></i><i class="btn"><svg><use href="#drawstyle"/></svg></i><i class="drop"></i><i class="btn"><svg><use href="#bbox"/></svg></i><i class="sep"></i>
      <i class="btn"><svg><use href="#back"/></svg></i><i class="btn"><svg><use href="#fwd"/></svg></i><i class="btn"><svg><use href="#linknav"/></svg></i><i class="drop"></i><i class="sep"></i>
      <i class="btn"><svg><use href="#sync"/></svg></i><i class="drop"></i><i class="btn"><svg><use href="#iso"/></svg></i><i class="sep"></i>
      <i class="btn"><svg><use href="#front"/></svg></i><i class="btn"><svg><use href="#top"/></svg></i><i class="btn"><svg><use href="#right"/></svg></i><i class="sep"></i>
      <i class="btn"><svg><use href="#rear"/></svg></i><i class="btn"><svg><use href="#bottom"/></svg></i><i class="btn"><svg><use href="#left"/></svg></i><i class="sep"></i><i class="btn"><svg><use href="#ruler"/></svg></i>
    </div>
    <div class="toolbar rest">
      <i class="btn"><svg><use href="#part"/></svg></i><i class="btn"><svg><use href="#folder"/></svg></i><i class="btn"><svg><use href="#link"/></svg></i><i class="btn"><svg><use href="#links"/></svg></i><i class="drop off"></i>
    </div>
  </div>

  <div class="row">
    <div class="toolbar sketch-bar">
      <i class="btn"><svg><use href="#sketch"/></svg></i><i class="btn"><svg><use href="#import"/></svg></i><i class="btn"><svg><use href="#export"/></svg></i><i class="btn"><svg><use href="#viewsk"/></svg></i><i class="btn"><svg><use href="#section"/></svg></i><i class="btn"><svg><use href="#mapsk"/></svg></i><i class="btn"><svg><use href="#reorient"/></svg></i><i class="btn"><svg><use href="#validate"/></svg></i><i class="btn"><svg><use href="#mergesk"/></svg></i><i class="btn"><svg><use href="#mirrorsk"/></svg></i><i class="btn"><svg><use href="#leave"/></svg></i>
    </div>
    <div class="toolbar geometry-bar">
      <i class="btn"><svg><use href="#point"/></svg></i><i class="btn"><svg><use href="#line"/></svg></i><i class="btn"><svg><use href="#arc"/></svg></i><i class="drop"></i><i class="btn"><svg><use href="#circle"/></svg></i><i class="drop"></i><i class="btn"><svg><use href="#cone"/></svg></i><i class="drop"></i><i class="btn"><svg><use href="#spline"/></svg></i><i class="drop"></i><i class="sep"></i>
      <i class="btn"><svg><use href="#polyline"/></svg></i><i class="btn"><svg><use href="#rect"/></svg></i><i class="drop"></i><i class="btn"><svg><use href="#hex"/></svg></i><i class="drop"></i><i class="btn"><svg><use href="#slot"/></svg></i><i class="sep"></i>
      <i class="btn"><svg><use href="#fillet"/></svg></i><i class="drop"></i><i class="btn"><svg><use href="#trim"/></svg></i><i class="btn"><svg><use href="#extend"/></svg></i><i class="btn"><svg><use href="#split"/></svg></i><i class="btn"><svg><use href="#external"/></svg></i><i class="btn"><svg><use href="#carbon"/></svg></i><i class="btn"><svg><use href="#construct"/></svg></i>
    </div>
    <div class="toolbar constraint-bar">
      <i class="btn"><svg><use href="#coincident"/></svg></i><i class="btn"><svg><use href="#onobject"/></svg></i><i class="btn"><svg><use href="#vertical"/></svg></i><i class="btn"><svg><use href="#horizontal"/></svg></i><i class="btn"><svg><use href="#parallel"/></svg></i><i class="btn"><svg><use href="#perp"/></svg></i><i class="btn"><svg><use href="#tangent"/></svg></i><i class="btn"><svg><use href="#equal"/></svg></i><i class="btn"><svg><use href="#symmetric"/></svg></i><i class="btn"><svg><use href="#block"/></svg></i><i class="sep"></i>
      <i class="btn"><svg><use href="#lock"/></svg></i><i class="btn"><svg><use href="#hdist"/></svg></i><i class="btn"><svg><use href="#vdist"/></svg></i><i class="btn"><svg><use href="#dist"/></svg></i><span class="more">»</span>
    </div>
    <div class="toolbar rest">
      <i class="btn"><svg viewBox="0 0 28 28"><text x="0" y="9" class="dof">D</text><text x="0" y="18.5" class="dof">O</text><text x="0" y="28" class="dof">F</text><path d="M23 5v18" class="ro"/><path d="M23 5v18" class="ri"/><path d="M9 8.500h5V6l5 4-5 4v-2.500H9zM9 17.500h5V15l5 4-5 4v-2.500H9z" fill="#c91010" stroke="#3c0808" stroke-width=".7"/><circle cx="23.5" cy="5" r="4.3" fill="#62bd0d" stroke="#245b00"/><circle cx="23.5" cy="23" r="4.3" fill="#62bd0d" stroke="#245b00"/></svg></i><span class="more">»</span>
    </div>
  </div>

  <div class="row tall">
    <div class="toolbar spline-bar">
      <i class="btn"><svg><use href="#bdegree"/></svg></i><i class="drop"></i><i class="btn"><svg><use href="#bpoly"/></svg></i><i class="btn"><svg><use href="#binc"/></svg></i><i class="btn"><svg><use href="#bdec"/></svg></i><i class="btn"><svg><use href="#bmult"/></svg></i><i class="drop"></i><i class="btn"><svg><use href="#bknot"/></svg></i>
    </div>
    <div class="toolbar rest"><i class="btn"><svg><use href="#vspace"/></svg></i></div>
  </div>

  <main class="work">
    <aside class="dock">
      <div class="dock-title"><span>콤보 보기</span><svg class="float" viewBox="0 0 12 12"><path d="M4 1h7v6H8M1 5h7v6H1z" fill="none" stroke="#333" stroke-width="1.4"/><path d="M1 5.500h7M4 1.500h7" stroke="#333" stroke-width="2"/></svg></div>
      <div class="tabs">
        <div class="tab">모델</div>
        <div class="tab on"><svg class="pencil" viewBox="0 0 20 20"><path d="M1 5l4-4 12 11 2 7-7-2z" fill="#2d5a93" stroke="#14294a"/><path d="M3 3l12 12" stroke="#6f9bd0"/><path d="M13 17l4-5 2 7z" fill="#eee" stroke="#222" stroke-width=".6"/></svg>작업</div>
      </div>
      <div class="pane">
        <div class="frame">
          <div class="tasks">
            <div class="close-line"><button class="button close">닫기</button></div>
            <section class="group solver">
              <h2 class="korean"><svg><use href="#note"/></svg>솔버 메세지</h2>
              <div class="body">
                <p>빈 스케치</p>
                <label><i class="box"></i>Auto remove redundants</label>
                <div class="update"><label><i class="box"></i>Auto update</label><button class="button">업데이트</button></div>
              </div>
            </section>
            <section class="group edit"><h2><svg><use href="#note"/></svg>Edit controls</h2></section>
            <section class="group constraints">
              <h2><svg><use href="#note"/></svg>Constraints</h2>
              <div class="body">
                <div class="filter"><span>Filter:</span><div class="combo"><span>All</span><svg class="chevron" viewBox="0 0 10 6"><path d="M1 .5l4 4 4-4" fill="none" stroke="#555" stroke-width="1.2"/></svg></div><button class="button select">Select</button></div>
                <div class="buttons"><button class="button show">Show Listed</button><button class="button hide">Hide Listed</button><button class="button restrict">Restrict Visibility</button></div>
                <div class="list"></div>
              </div>
            </section>
            <section class="group elements"><h2 class="korean"><svg><use href="#note"/></svg>요소</h2></section>
          </div>
          <div class="scroll">
            <svg viewBox="0 0 16 20"><path d="M4.500 13L8 9.500l3.500 3.500" fill="none" stroke="#505050" stroke-width="2"/></svg>
            <i class="thumb"></i>
            <svg viewBox="0 0 16 20"><path d="M4.500 8L8 11.500 11.500 8" fill="none" stroke="#505050" stroke-width="2"/></svg>
          </div>
        </div>
      </div>
    </aside>

    <section class="mdi">
      <div class="view">
        <i class="axis-v"></i><i class="axis-h"></i>
        <svg class="navcube" viewBox="0 24 540 456">
          <g fill="#8f90af"><path d="M288 81l33-36 33 36zM288 405h66l-33 36zM159 209v68l-36-34zM483 209v68l35-34z"/><circle cx="501" cy="63" r="18"/><path d="M265 66l5 23q-35 9-63 36l6 13-40 13 7-46 9 4q30-30 76-43zM377 66l-5 23q35 9 63 36l-6 13 38 13-5-46-9 4q-30-30-76-43z"/></g>
          <path d="M246 150h148l20 22v145l-20 18H246l-18-18V172z" fill="#bbc0d4"/>
          <rect x="245" y="166" width="153" height="154" fill="#b8bdd2" stroke="#1c1c2a" stroke-width="3"/>
          <path d="M230 170l20-19M392 151l20 20M232 314l18 20M392 334l20-18" stroke="#555a70" stroke-width="4"/>
          <path d="M210 192v162" stroke="#00f" stroke-width="6"/><path d="M210 353l32-32" stroke="#0f0" stroke-width="4"/><path d="M208 354h163" stroke="#f00" stroke-width="6"/>
          <text x="273" y="261" textLength="106">FRONT</text>
          <path d="M420 366l30 11v38l-30 11-30-11v-38z" fill="#8688a4"/><path d="M390 377l30-11 30 11-30 9z" fill="#9fa1bb"/><path d="M420 386l30-9v38l-30 11z" fill="#74769a"/><path d="M463 388h35l-18 18z" fill="#44445e"/>
        </svg>
        <svg class="axes" viewBox="0 0 40 40"><path d="M5.500 34V8" stroke="#22228c" stroke-width="1.3"/><path d="M2 17l3.500-8L9 17z" fill="#22228c"/><path d="M6 34h24" stroke="#8c2222" stroke-width="1.3"/><path d="M22 30.500l8 3.500-8 3.500z" fill="#8c2222"/><circle cx="5.5" cy="34" r="2" fill="#228c22"/><text x="6.5" y="7.5">Z</text><text x="6" y="32.5">Y</text><text x="31" y="32.5">X</text></svg>
      </div>
      <div class="doc-tabs">
        <div class="doc"><svg class="app-icon"><use href="#app"/></svg><span>시작 페이지</span><svg class="x"><use href="#closeTab"/></svg></div>
        <div class="doc on"><svg class="app-icon"><use href="#app"/></svg><span>Unnamed : 1*</span><svg class="x"><use href="#closeTab"/></svg></div>
      </div>
    </section>
  </main>

  <footer class="status">
    <span class="message">Preselected: Unnamed,Body,Sketch,V_Axis (0,000000 mm,-999,070122 nm,-7,801893 mm)</span>
    <div class="nav-style"><svg viewBox="0 0 14 18"><rect x="1.5" y="1" width="10.5" height="16" rx="4.5" fill="none" stroke="#30363a" stroke-width="1.7"/><path d="M6.700 4v4" stroke="#30363a" stroke-width="2"/></svg><span>CAD</span><i class="arrow"></i></div>
    <span class="dims">206,51 mm x 100,00 mm</span>
  </footer>
</div>

<!-- callout -->
<div class="source-box"></div>
<svg class="leader" viewBox="0 0 740 310"><path d="M6 9L726 306" stroke="#000" stroke-width="4.5"/></svg>
<div class="inset">
  <div class="row tall inset-top">
    <div class="toolbar bare inset-views">
      <i class="sep"></i><i class="btn"><svg><use href="#front"/></svg></i><i class="btn"><svg><use href="#top"/></svg></i><i class="btn"><svg><use href="#right"/></svg></i><i class="sep"></i>
      <i class="btn"><svg><use href="#rear"/></svg></i><i class="btn"><svg><use href="#bottom"/></svg></i><i class="btn"><svg><use href="#left"/></svg></i><i class="sep"></i><i class="btn"><svg><use href="#ruler"/></svg></i>
    </div>
    <div class="toolbar rest"><i class="btn"><svg><use href="#part"/></svg></i></div>
  </div>
  <div class="row inset-bottom">
    <div class="toolbar bare inset-leave"><i class="btn"><svg><use href="#leave"/></svg></i></div>
    <div class="toolbar rest">
      <i class="btn"><svg><use href="#point"/></svg></i><i class="btn"><svg><use href="#line"/></svg></i><i class="btn"><svg><use href="#arc"/></svg></i><i class="drop"></i><i class="btn chosen"><svg><use href="#circle"/></svg></i><i class="drop"></i><i class="btn"><svg><use href="#cone"/></svg></i><i class="drop"></i><i class="btn"><svg><use href="#spline"/></svg></i><i class="drop"></i><i class="sep last"></i>
    </div>
  </div>
  <div class="row inset-rest"></div>
</div>
<div class="mouse"><i class="stem"></i><i class="left-key"></i><i class="right-key"></i><span>x 1</span></div>
</body>
</html>
```
FILE: styles.css
```css
*, *::before, *::after { box-sizing: border-box; }
body {
  --u: 1px;
  --line: #b9b9b9;
  margin: 0;
  width: 1921px;
  height: 1031px;
  overflow: hidden;
  position: relative;
  background: #fff;
  color: #000;
  font: 300 15.5px Roboto, "Noto Sans CJK KR", sans-serif;
}
i { font-style: normal; }
.defs { position: absolute; width: 0; height: 0; }
.app { width: 1920px; height: 1030px; background: #f0f0f0; display: flex; flex-direction: column; }

/* icon strokes */
.ko { fill: none; stroke: #084648; stroke-width: 3.4; stroke-linejoin: round; }
.ki { fill: none; stroke: #2bc9cc; stroke-width: 1.2; stroke-linejoin: round; }
.green .ko { stroke: #073d07; }
.green .ki { stroke: #26e026; }
.stub-o { fill: none; stroke: #084648; stroke-width: 2.8; }
.stub-i { fill: none; stroke: #2bb3b5; stroke-width: 1; }
.ro { fill: none; stroke: #59625f; stroke-width: 4; }
.ri { fill: none; stroke: #e9ebe6; stroke-width: 2; }
.co { fill: none; stroke: #3c0808; stroke-width: 5; }
.ci { fill: none; stroke: #dd0808; stroke-width: 3.2; }
.co.wide { stroke-width: 7; }
.ci.wide { stroke-width: 5; }
.dof { font: 11px "Liberation Sans", sans-serif; fill: #4568d0; }

/* title and menu */
.titlebar { height: 30px; background: #fff; display: flex; align-items: center; padding: 0 0 2px 2px; }
.app-icon { width: 20px; height: 20px; }
.title { font: 14.5px "Noto Sans", sans-serif; letter-spacing: -.1px; margin-left: 5px; }
.window-buttons { width: 140px; height: 20px; margin-left: auto; margin-right: 19px; }
.menu { height: 26px; background: #fff; display: flex; align-items: center; padding: 0 0 3px 10px; gap: 21px; font: 14.5px/24px "Noto Sans", "Noto Sans CJK KR", sans-serif; letter-spacing: -.4px; }
.menu span { min-width: 47px; white-space: nowrap; }
.menu .wide { min-width: 66px; }
.menu .window-menu { min-width: 36px; }
.menu u { text-underline-offset: 2px; text-decoration-thickness: 1px; }

/* toolbars */
.row {
  display: flex;
  height: calc(var(--u) * 42);
  flex: none;
  background: linear-gradient(#fff, #fff) 0 var(--u) / 100% var(--u) no-repeat #f0f0f0;
}
.row.first { background: #f0f0f0; }
.row.tall { height: calc(var(--u) * 43); }
.toolbar {
  position: relative;
  display: flex;
  align-items: center;
  flex: none;
  padding: calc(var(--u) * 2) 0 0 calc(var(--u) * 11.6);
  border-bottom: var(--u) solid var(--line);
  border-right: var(--u) solid var(--line);
  margin-right: var(--u);
}
.toolbar::before {
  content: "";
  position: absolute;
  left: calc(var(--u) * 4.5);
  top: calc(var(--u) * 5);
  bottom: calc(var(--u) * 3);
  width: calc(var(--u) * 2);
  background: repeating-linear-gradient(#bdbdbd 0 calc(var(--u) * 1.7), #f6f6f6 calc(var(--u) * 1.7) calc(var(--u) * 4));
}
.toolbar.bare::before { display: none; }
.toolbar.rest { flex: 1; min-width: 0; border-right: 0; margin-right: 0; }
.btn { flex: none; width: calc(var(--u) * 38.8); display: flex; justify-content: center; }
.btn svg { width: calc(var(--u) * 28); height: calc(var(--u) * 28); display: block; }
.drop { flex: none; width: calc(var(--u) * 15); display: flex; justify-content: center; }
.drop::before { content: ""; border: calc(var(--u) * 3.6) solid transparent; border-top: calc(var(--u) * 3.8) solid #222; border-bottom: 0; }
.drop.off::before { border-top-color: #777; }
.sep { flex: none; width: calc(var(--u) * 7.2); height: calc(var(--u) * 30); display: flex; justify-content: center; }
.sep::before { content: ""; width: var(--u); background: #cdcdcd; }
.sep.last { margin-left: calc(var(--u) * -1); }
.file-bar { width: 562px; }
.file-bar .sep, .view-bar .sep { width: 7.5px; }
.workbench-bar { width: 215px; }
.view-bar { width: 717px; }
.sketch-bar { width: 441px; }
.geometry-bar { width: 793px; margin-right: 0; }
.constraint-bar { width: 616px; margin-right: 1px; }
.spline-bar { width: 277px; }
.more { margin-left: auto; font: 16px/20px "Liberation Sans", sans-serif; padding: 0 3px 4px; color: #333; }
.combo { height: 26px; border: 1px solid #adadad; background: #e1e1e1; display: flex; align-items: center; }
.combo .chevron { width: 10px; height: 6px; margin-left: auto; margin-right: 6px; }
.workbench { width: 202px; height: 28px; font: 14.7px "Noto Sans", sans-serif; margin-left: .4px; }
.wb-icon { width: 20px; height: 20px; margin: 0 4px 0 5px; }

/* dock */
.work { flex: 1; min-height: 0; display: flex; padding-top: 2px; }
.dock { width: 392px; height: 765px; display: flex; flex-direction: column; }
.dock-title { height: 23px; flex: none; border: 1px solid #b5b5b5; background: #d9d9d9; display: flex; align-items: center; padding: 0 7px 0 6px; font: 300 15.5px "Noto Sans CJK KR", sans-serif; }
.float { width: 12px; height: 12px; margin-left: auto; }
.tabs { display: flex; align-items: flex-end; height: 33px; flex: none; padding-left: 3px; }
.tab { width: 55px; height: 26px; border: 1px solid #d9d9d9; border-bottom: 0; display: flex; align-items: center; justify-content: center; padding: 0 2px 4px 0; }
.tab.on { width: 87px; height: 29px; background: #fff; justify-content: flex-start; padding: 0 0 5px 16px; gap: 5px; }
.pencil { width: 20px; height: 20px; }
.pane { flex: 1; min-height: 0; background: #fff; border: 1px solid #d9d9d9; width: 391px; padding: 1px 2px 3px; display: flex; }
.frame { width: 384px; border: 1px solid #828790; border-left-color: #fff; display: flex; padding: 1px 4px 0 0; overflow: hidden; }
.tasks { flex: 1; min-width: 0; overflow: hidden; background: linear-gradient(#acacc2, #333366 366px); padding-left: 10px; }
.button { flex: none; font: inherit; letter-spacing: inherit; color: #000; background: #e1e1e1; border: 1px solid #adadad; padding: 0; white-space: nowrap; }
.close-line { padding: 21px 0 0 190px; height: 70px; }
.close { width: 91px; height: 27px; display: block; padding: 0 2px 4px 0; }
.group { width: 400px; border: 1px solid #fff; border-radius: 3px 3px 0 0; overflow: hidden; }
.group h2 { margin: 0; height: 30px; display: flex; align-items: center; gap: 3px; padding: 0 0 1px 7px; font: bold 15px "Liberation Sans", "Noto Sans CJK KR", sans-serif; color: #215dc6; background: linear-gradient(90deg, #fff 5%, #d4dcf8 92%); border-bottom: 1px solid #fff; }
.group h2.korean { letter-spacing: 1.2px; font-weight: 500; }
.group h2 svg { width: 18px; height: 20px; }
.group .body { background: #d6def8; padding-left: 16px; }
.group p { margin: 0; line-height: 20px; letter-spacing: .5px; }
.solver { height: 155px; }
.solver .body { height: 124px; padding-top: 19px; }
.solver label { display: flex; align-items: center; gap: 7px; height: 20px; padding-left: 2px; flex: none; }
.solver > .body > label { margin-top: 9px; letter-spacing: .27px; }
.update { display: flex; align-items: center; margin-top: 9px; height: 26px; }
.update label { width: 224px; letter-spacing: .2px; }
.update .button { width: 190px; height: 26px; text-align: left; padding-left: 74px; }
.box { width: 13px; height: 13px; border: 1px solid #222; background: #fff; }
.edit { margin-top: 10px; height: 32px; }
.constraints { margin-top: 12px; height: 379px; }
.constraints .body { height: 348px; padding-top: 17px; }
.filter { display: flex; align-items: center; height: 27px; }
.filter > span { width: 48px; letter-spacing: .3px; }
.filter .combo { width: 226px; height: 25px; padding-left: 3px; }
.select { width: 70px; height: 27px; margin-left: 9px; text-align: left; padding-left: 3px; letter-spacing: .3px; }
.buttons { display: flex; align-items: center; gap: 9px; margin-top: 10px; height: 27px; padding-left: 1px; }
.show { width: 95px; height: 26px; letter-spacing: .2px; }
.hide { width: 92px; height: 26px; letter-spacing: .2px; }
.restrict { width: 220px; height: 21px; line-height: 18px; text-align: left; padding-left: 49px; letter-spacing: .4px; }
.list { margin: 8px 0 0 0; height: 240px; border: 1px solid #828790; border-top-color: #fff; background: #fff; box-shadow: inset 2px 0 #e6ebfa, inset 0 -2px #e6ebfa, inset 0 1px #e0e6f8; }
.elements { margin-top: 9px; height: 40px; }
.scroll { width: 17px; background: #f0f0f0; display: flex; flex-direction: column; align-items: flex-end; }
.scroll svg { width: 16px; height: 20px; flex: none; }
.thumb { height: 379px; width: 16px; background: #cdcdcd; margin-bottom: auto; }

/* 3D view */
.mdi { margin-left: 6px; width: 1521px; display: flex; flex-direction: column; }
.view { position: relative; height: 737px; background: linear-gradient(#333366, #acacc2); border-bottom: 1px solid #a0a0a0; overflow: hidden; }
.axis-v { position: absolute; left: 760px; top: 0; width: 2px; height: 100%; background: #80f996; }
.axis-h { position: absolute; left: 0; top: 368px; width: 100%; height: 2px; background: rgba(208, 92, 96, .85); }
.navcube { position: absolute; left: 1342px; top: 0; width: 180px; height: 152px; }
.navcube text { font: 47px "Liberation Sans", sans-serif; }
.axes { position: absolute; right: 1px; bottom: 29px; width: 40px; height: 40px; }
.axes text { font: bold 9px "DejaVu Sans", sans-serif; }
.doc-tabs { display: flex; align-items: flex-start; padding-left: 2px; }
.doc { height: 26px; width: 155px; display: flex; align-items: center; padding-left: 13px; border-right: 1px solid #d9d9d9; border-bottom: 1px solid #d9d9d9; }
.doc span { width: 78px; margin-left: 5px; white-space: nowrap; letter-spacing: .5px; }
.doc .x { width: 18px; height: 18px; margin-left: 7px; color: #b0b0b0; }
.doc.on { width: 181px; height: 29px; background: #fff; padding-left: 17px; }
.doc.on span { width: 98px; letter-spacing: .6px; }
.doc.on .x { color: #d9442b; margin-left: 6px; }

/* status bar */
.status { height: 37px; flex: none; display: flex; align-items: center; padding: 2px 6px 0 2px; }
.message { letter-spacing: .49px; white-space: nowrap; }
.nav-style { margin-left: auto; width: 103px; height: 31px; border-left: 1px solid #d7d7d7; border-right: 1px solid #d7d7d7; display: flex; align-items: center; padding-left: 22px; }
.nav-style svg { width: 14px; height: 18px; margin-right: 5px; }
.arrow { border: 5px solid transparent; border-top: 6px solid #000; border-bottom: 0; margin-left: 11px; }
.dims { width: 173px; margin-left: 4px; letter-spacing: .25px; white-space: nowrap; }

/* callout */
.source-box { position: absolute; left: 417px; top: 118px; width: 345px; height: 93px; border: 4.5px solid #000; border-radius: 13px; }
.leader { position: absolute; left: 756px; top: 124px; width: 740px; height: 310px; }
.inset { --u: 2.695px; position: absolute; left: 571px; top: 428px; width: 924px; height: 242px; border: 5px solid #000; border-radius: 14px; overflow: hidden; background: #f0f0f0; display: flex; flex-direction: column; }
.inset-top { margin-top: calc(var(--u) * -23.5); background: #f0f0f0; }
.inset-bottom { background: #f0f0f0; }
.inset-bottom .toolbar { padding-top: calc(var(--u) * 2.6); }
.inset-bottom .rest { padding-left: calc(var(--u) * 11.8); }
.inset-views { padding-left: calc(var(--u) * 1); width: calc(var(--u) * 297.8); }
.inset-views .btn svg { position: relative; left: calc(var(--u) * .6); }
.inset-leave { padding-left: 0; margin-left: calc(var(--u) * -19.7); width: calc(var(--u) * 41); border-right-width: 5px; }
.inset-rest { flex: 1; }
.chosen { position: relative; }
.chosen::after { content: ""; position: absolute; left: -3px; top: -17.5px; width: 109px; height: 109px; border: 4.5px solid #ff5500; border-radius: 12px; }
.mouse { position: absolute; left: 1128px; top: 606px; width: 59px; height: 77px; border: 2px solid #000; border-radius: 20px; background: #fff; display: grid; grid-template: 28px 1fr / 28px 1fr; }
.left-key { background: #e61e19; border-radius: 17px 0 0; border-right: 2px solid #000; border-bottom: 2px solid #000; }
.right-key { border-bottom: 2px solid #000; }
.mouse span { grid-column: 1 / 3; text-align: center; font: 22px/42px Inter, sans-serif; }
.stem { position: absolute; left: 26px; top: -19px; width: 2px; height: 20px; background: #000; }
```
